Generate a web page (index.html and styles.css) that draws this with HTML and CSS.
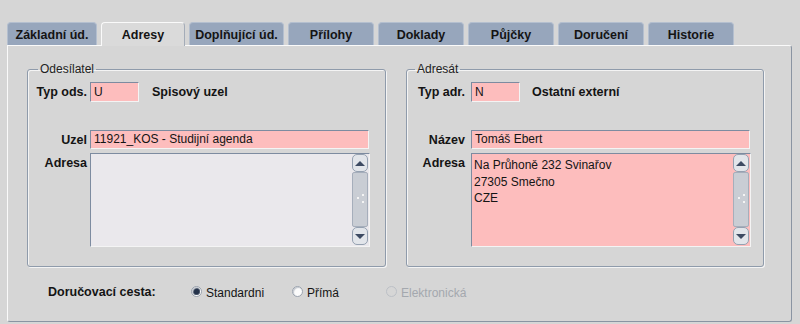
FILE: index.html
```html
<!DOCTYPE html>
<html lang="cs">
<head>
    <meta charset="UTF-8">
    <title>Adresy</title>
    <link rel="stylesheet" href="styles.css">
</head>
<body>
    <div class="window">
        <!-- Záložky -->
        <div class="tabs">
            <div class="tab">Základní úd.</div>
            <div class="tab tab-active">Adresy</div>
            <div class="tab">Doplňující úd.</div>
            <div class="tab">Přílohy</div>
            <div class="tab">Doklady</div>
            <div class="tab">Půjčky</div>
            <div class="tab">Doručení</div>
            <div class="tab">Historie</div>
        </div>

        <div class="panel">
            <div class="groups">
                <!-- Odesílatel -->
                <fieldset class="group group-left">
                    <legend>Odesílatel</legend>
                    <div class="row row-type">
                        <span class="label">Typ ods.</span>
                        <span class="field field-short">U</span>
                        <span class="type-name">Spisový uzel</span>
                    </div>
                    <div class="row row-name">
                        <span class="label">Uzel</span>
                        <span class="field field-wide">11921_KOS - Studijní agenda</span>
                    </div>
                    <div class="row row-address">
                        <span class="label">Adresa</span>
                        <div class="area area-empty">
                            <div class="area-text"></div>
                            <div class="scrollbar">
                                <div class="sb-btn"><span class="arrow-up"></span></div>
                                <div class="sb-thumb"><span class="grip"></span></div>
                                <div class="sb-btn"><span class="arrow-down"></span></div>
                            </div>
                        </div>
                    </div>
                </fieldset>

                <!-- Adresát -->
                <fieldset class="group group-right">
                    <legend>Adresát</legend>
                    <div class="row row-type">
                        <span class="label">Typ adr.</span>
                        <span class="field field-short">N</span>
                        <span class="type-name">Ostatní externí</span>
                    </div>
                    <div class="row row-name">
                        <span class="label">Název</span>
                        <span class="field field-wide">Tomáš Ebert</span>
                    </div>
                    <div class="row row-address">
                        <span class="label">Adresa</span>
                        <div class="area">
                            <div class="area-text">
                                <div>Na Průhoně 232 Svinařov</div>
                                <div>27305 Smečno</div>
                                <div>CZE</div>
                            </div>
                            <div class="scrollbar">
                                <div class="sb-btn"><span class="arrow-up"></span></div>
                                <div class="sb-thumb"><span class="grip"></span></div>
                                <div class="sb-btn"><span class="arrow-down"></span></div>
                            </div>
                        </div>
                    </div>
                </fieldset>
            </div>

            <!-- Doručovací cesta -->
            <div class="delivery">
                <span class="delivery-label">Doručovací cesta:</span>
                <span class="radio radio-standard"><span class="dot dot-on"></span>Standardni</span>
                <span class="radio radio-direct"><span class="dot"></span>Přímá</span>
                <span class="radio radio-disabled"><span class="dot"></span>Elektronická</span>
            </div>
        </div>
    </div>
</body>
</html>
```

FILE: styles.css
```css
:root {
    --bg: #d6d6d6;
    --tab: #97a6bc;
    --tab-border: #b4bfcf;
    --line: #8f9bab;
    --pink: #fdbdbd;
    --text: #141414;
}

* {
    margin: 0;
    padding: 0;
    box-sizing: border-box;
}

body {
    font-family: 'Liberation Sans', Arial, sans-serif;
    font-size: 12px;
    color: var(--text);
    background: var(--bg);
    width: 800px;
    height: 324px;
    overflow: hidden;
}

.window {
    padding: 22px 8px 0 7px;
}

/* záložky */
.tabs {
    display: flex;
    gap: 4px;
    height: 23px;
    position: relative;
    z-index: 1;
}

.tab {
    width: 86px;
    height: 23px;
    background: var(--tab);
    border: 1px solid var(--tab-border);
    border-bottom: none;
    border-radius: 4px 4px 0 0;
    font-weight: bold;
    font-size: 12.5px;
    text-align: center;
    line-height: 24px;
}

.tab:nth-child(1) { width: 90px; }
.tab:nth-child(2) { width: 84px; }
.tab:nth-child(3) { width: 95px; }

.tab-active {
    background: #dadada;
    border-color: #fafafa;
    border-right-color: #a4acb8;
    height: 24px;
}

.panel {
    height: 277px;
    border: 1px solid #fafafa;
    border-right-color: #8a94a2;
    border-bottom-color: #8a94a2;
    border-radius: 0 3px 3px 3px;
}

.groups {
    display: flex;
    gap: 20px;
    margin: 16px 0 0 19px;
}

.group {
    height: 205px;
    border: 1px solid var(--line);
    border-radius: 3px;
    box-shadow: 1px 1px 0 #f4f4f4, inset 1px 1px 0 #f4f4f4;
    padding: 6px 0 0 5px;
}

.group-left { width: 359px; }

.group-right {
    width: 358px;
    padding-left: 10px;
}

.group legend {
    margin-left: 5px;
    padding: 0 2px;
    line-height: 14px;
    color: #222;
}

.group-right legend {
    margin-left: -2px;
}

.row {
    display: flex;
    align-items: center;
}

.label {
    width: 54px;
    margin-right: 3px;
    text-align: right;
    font-weight: bold;
    font-size: 12.5px;
    white-space: nowrap;
}

.group-right .label {
    width: 48px;
    margin-right: 6px;
}

.field {
    background: var(--pink);
    border: 1px solid #f4f4f4;
    border-top-color: #7d8ba0;
    border-left-color: #7d8ba0;
    padding-left: 3px;
    line-height: 17px;
}

.field-short {
    width: 49px;
    height: 20px;
    line-height: 18px;
}

.field-wide {
    width: 279px;
    height: 19px;
}

.type-name {
    margin-left: 13px;
    font-weight: bold;
    font-size: 12.5px;
}

.group-right .type-name {
    margin-left: 12px;
}

.row-name {
    margin-top: 28px;
}

.row-address {
    margin-top: 4px;
    align-items: flex-start;
}

.row-address .label {
    padding-top: 3px;
}

.area {
    display: flex;
    width: 280px;
    height: 94px;
    background: var(--pink);
    border: 1px solid #f4f4f4;
    border-top-color: #7d8ba0;
    border-left-color: #7d8ba0;
}

.area-empty {
    background: #eae8ec;
}

.area-text {
    flex: 1;
    padding: 3px 0 0 2px;
    line-height: 16.5px;
}

/* posuvník */
.scrollbar {
    width: 16px;
    display: flex;
    flex-direction: column;
    margin: 0 1px 1px 0;
}

.sb-btn {
    height: 18px;
    background: #e2e5ea;
    border: 1px solid #95a1b1;
    border-radius: 5px;
    display: flex;
    align-items: center;
    justify-content: center;
}

.sb-thumb {
    flex: 1;
    background: #c9cdd4;
    border: 1px solid #a6aebb;
    border-radius: 2px;
    position: relative;
}

.arrow-up {
    border-left: 5px solid transparent;
    border-right: 5px solid transparent;
    border-bottom: 5px solid #3d4a62;
}

.arrow-down {
    border-left: 5px solid transparent;
    border-right: 5px solid transparent;
    border-top: 5px solid #3d4a62;
}

.grip {
    position: absolute;
    left: 4px;
    top: 24px;
    width: 2px;
    height: 2px;
    background: #f4f4f4;
    box-shadow: 5px -3px 0 #f4f4f4, 5px 4px 0 #f4f4f4;
}

/* doručovací cesta */
.delivery {
    display: flex;
    align-items: center;
    margin: 17px 0 0 40px;
    height: 16px;
}

.delivery-label {
    width: 143px;
    font-weight: bold;
    font-size: 12.5px;
}

.radio {
    display: flex;
    align-items: center;
    gap: 4px;
    padding-top: 2px;
}

.radio-standard { width: 101px; }
.radio-direct { width: 94px; }

.radio-disabled {
    color: #a4a8ae;
}

.dot {
    width: 11px;
    height: 11px;
    margin-top: -3px;
    border-radius: 50%;
    background: #fbfbfb;
    border: 1px solid #9aa2ae;
    box-shadow: inset 1px 1px 1px #c4c8ce;
}

.dot-on {
    background: radial-gradient(circle, #24324a 0 2.5px, #6c7686 3.5px, #fbfbfb 4px);
}

.radio-disabled .dot {
    background: var(--bg);
    border-color: #bcc0c6;
    box-shadow: none;
}
```
